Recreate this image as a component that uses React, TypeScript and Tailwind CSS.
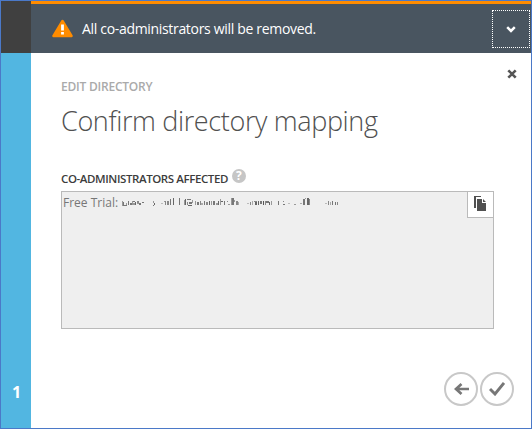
import React from "react";

const FONT = "font-['Open_Sans','Noto_Sans',sans-serif]";

// x, y, width, height, shade of each surviving fragment of the obscured address
const FRAGMENTS: [number, number, number, number, string][] = [
  [0, 3, 1, 5, "#999"], [1, 4, 1, 4, "#777"], [2, 7, 3, 1, "#777"], [4, 5, 1, 2, "#999"],
  [6, 3, 1, 4, "#777"], [8, 5, 2, 2, "#777"], [10, 3, 1, 4, "#999"], [11, 3, 2, 1, "#777"], [11, 5, 2, 2, "#999"],
  [13, 4, 1, 3, "#666"], [15, 3, 2, 2, "#888"], [15, 5, 3, 1, "#999"], [17, 5, 2, 2, "#777"], [20, 4, 2, 1, "#777"],
  [31, 3, 1, 2, "#999"], [32, 5, 1, 2, "#666"], [31, 7, 1, 1, "#777"], [39, 5, 2, 1, "#bbb"],
  [42, 3, 1, 1, "#999"], [43, 3, 1, 4, "#888"], [45, 3, 2, 4, "#888"], [48, 1, 1, 6, "#777"], [51, 0, 1, 7, "#666"],
  [57, 0, 1, 7, "#777"], [62, 2, 1, 5, "#999"], [63, 1, 1, 6, "#666"], [65, 1, 4, 1, "#777"], [65, 4, 1, 3, "#888"],
  [66, 7, 4, 1, "#666"], [67, 4, 3, 2, "#777"], [70, 2, 1, 3, "#999"],
  [73, 3, 1, 4, "#999"], [75, 4, 2, 3, "#777"], [78, 3, 1, 4, "#888"], [79, 5, 2, 2, "#aaa"], [82, 3, 1, 4, "#777"],
  [84, 4, 2, 3, "#888"], [87, 3, 1, 4, "#666"], [89, 3, 1, 4, "#999"], [91, 3, 2, 4, "#777"], [94, 5, 2, 2, "#999"],
  [96, 3, 1, 4, "#666"], [98, 1, 1, 6, "#999"], [99, 3, 2, 1, "#666"], [102, 3, 1, 4, "#777"],
  [105, 3, 1, 1, "#888"], [106, 6, 2, 1, "#999"], [109, 0, 1, 7, "#999"], [110, 0, 2, 7, "#777"], [112, 2, 1, 2, "#999"],
  [114, 3, 2, 4, "#888"], [116, 4, 1, 3, "#aaa"], [125, 5, 2, 1, "#bbb"], [128, 4, 1, 3, "#888"], [130, 3, 1, 4, "#aaa"],
  [132, 3, 3, 1, "#888"], [133, 4, 2, 3, "#666"], [136, 3, 1, 4, "#666"], [138, 3, 2, 3, "#777"], [141, 3, 1, 4, "#555"],
  [143, 3, 1, 4, "#888"], [144, 3, 3, 2, "#777"], [147, 4, 1, 3, "#666"], [149, 3, 1, 4, "#999"],
  [156, 3, 1, 4, "#777"], [161, 3, 1, 1, "#888"], [161, 6, 2, 1, "#777"], [166, 5, 2, 1, "#bbb"], [172, 6, 2, 1, "#999"],
  [178, 5, 2, 1, "#aaa"], [181, 1, 2, 6, "#777"], [183, 0, 1, 1, "#999"], [185, 0, 2, 7, "#666"], [187, 1, 1, 6, "#888"],
  [203, 5, 2, 1, "#bbb"], [206, 3, 1, 4, "#888"], [208, 4, 1, 3, "#aaa"], [210, 3, 1, 4, "#777"], [213, 4, 1, 3, "#777"], [215, 4, 1, 3, "#888"],
];

export default function App() {
  return (
    <div className={`flex h-[429px] w-[532px] flex-col overflow-hidden border border-[#4b79c8] bg-white ${FONT}`}>
      <header className="flex h-[52px] shrink-0">
        <div className="w-[30px] bg-[#404040]" />
        <div className="flex flex-1 items-start border-t-[3px] border-[#ff8c00] bg-[#495560]">
          <svg className="mt-[15px] ml-[21px] h-[19px] w-[21px]" viewBox="0 0 21 19">
            <path d="M10.5 2 L19.5 17 H1.5 Z" fill="#ff8c00" stroke="#ff8c00" strokeWidth="2.5" strokeLinejoin="round" />
            <path d="M10.5 5.5 V11.5 M10.5 13 V15.5" stroke="white" strokeWidth="2.8" />
          </svg>
          <p className="mt-[15px] ml-[9px] h-5 flex-1 text-sm leading-5 tracking-[-0.32px] text-white">All co-administrators will be removed.</p>
          <button className="mt-1.5 mr-px flex h-[38px] w-[38px] items-center justify-center border border-dotted border-white">
            <svg className="h-[7px] w-[10px]" viewBox="0 0 10 7"><path d="M1.2 1.2 L5 5 L8.8 1.2" fill="none" stroke="white" strokeWidth="2.5" /></svg>
          </button>
        </div>
      </header>
      <div className="flex min-h-0 flex-1">
        <aside className="flex w-[30px] items-end justify-center bg-[#52b6e1] pb-[26px] pl-px text-base leading-5 font-bold text-white">1</aside>
        <main className="flex flex-1 flex-col pl-[30px]">
          <div className="flex h-[50px] justify-between pr-3.5">
            <h2 className="mt-6 text-xs leading-5 font-semibold tracking-[-0.22px] text-[#aaaaaa]">EDIT DIRECTORY</h2>
            <svg className="mt-4 h-[10px] w-[10px]" viewBox="0 0 10 10"><path d="M1.3 1.3 L8.7 8.7 M8.7 1.3 L1.3 8.7" stroke="#555" strokeWidth="2.6" /></svg>
          </div>
          <h1 className="h-[64px] text-[27px] leading-9 font-light tracking-[-0.36px] whitespace-nowrap text-[#505050]">Confirm directory mapping</h1>
          <div className="flex h-6 items-start gap-1">
            <h3 className="mt-[2px] text-[11.5px] leading-5 font-semibold tracking-[-0.41px] whitespace-nowrap text-[#3c3c3c]">CO-ADMINISTRATORS AFFECTED</h3>
            <span className="mt-[2px] flex h-[14px] w-[14px] items-center justify-center rounded-full bg-[#c6c6c6] text-xs font-bold text-white">?</span>
          </div>
          <section className="flex h-[138px] w-[433px] justify-between border border-[#bababa] bg-[#efefef]">
            <div className="flex pl-px">
              <span className="w-[55px] text-xs leading-[22px] whitespace-nowrap text-[#777]">Free Trial:</span>
              <svg className="mt-[6px] ml-1 h-[10px] w-[220px]" viewBox="0 0 220 10" shapeRendering="crispEdges">
                {FRAGMENTS.map(([x, y, w, h, c], i) => <rect key={i} x={x} y={y} width={w} height={h} fill={c} />)}
              </svg>
            </div>
            <button className="flex h-[26px] w-[26px] items-start border-b border-l border-[#bababa] bg-white">
              <svg className="mt-1 ml-1.5 h-[15px] w-[13px]" viewBox="0 0 13 15"><path d="M0 0 H7 V1 H2 V12 H0 Z M3 3 H8 V7 H12 V15 H3 Z M9 3 L12 6 H9 Z" fill="#505050" /></svg>
            </button>
          </section>
          <footer className="mt-[43px] ml-[383px] flex gap-0.5">
            <button className="flex h-[34px] w-[34px] items-center justify-center rounded-full border-2 border-[#c8c8c8]">
              <svg className="h-3 w-[15px]" viewBox="0 0 15 12"><path d="M15 6 H2 M7.5 1 L2 6 L7.5 11" fill="none" stroke="#777" strokeWidth="2.7" /></svg>
            </button>
            <button className="flex h-[34px] w-[34px] items-center justify-center rounded-full border-2 border-[#c8c8c8]">
              <svg className="h-[14px] w-4" viewBox="0 0 16 14"><path d="M1 7 L6 12 L15 1" fill="none" stroke="#777" strokeWidth="2.9" /></svg>
            </button>
          </footer>
        </main>
      </div>
    </div>
  );
}
